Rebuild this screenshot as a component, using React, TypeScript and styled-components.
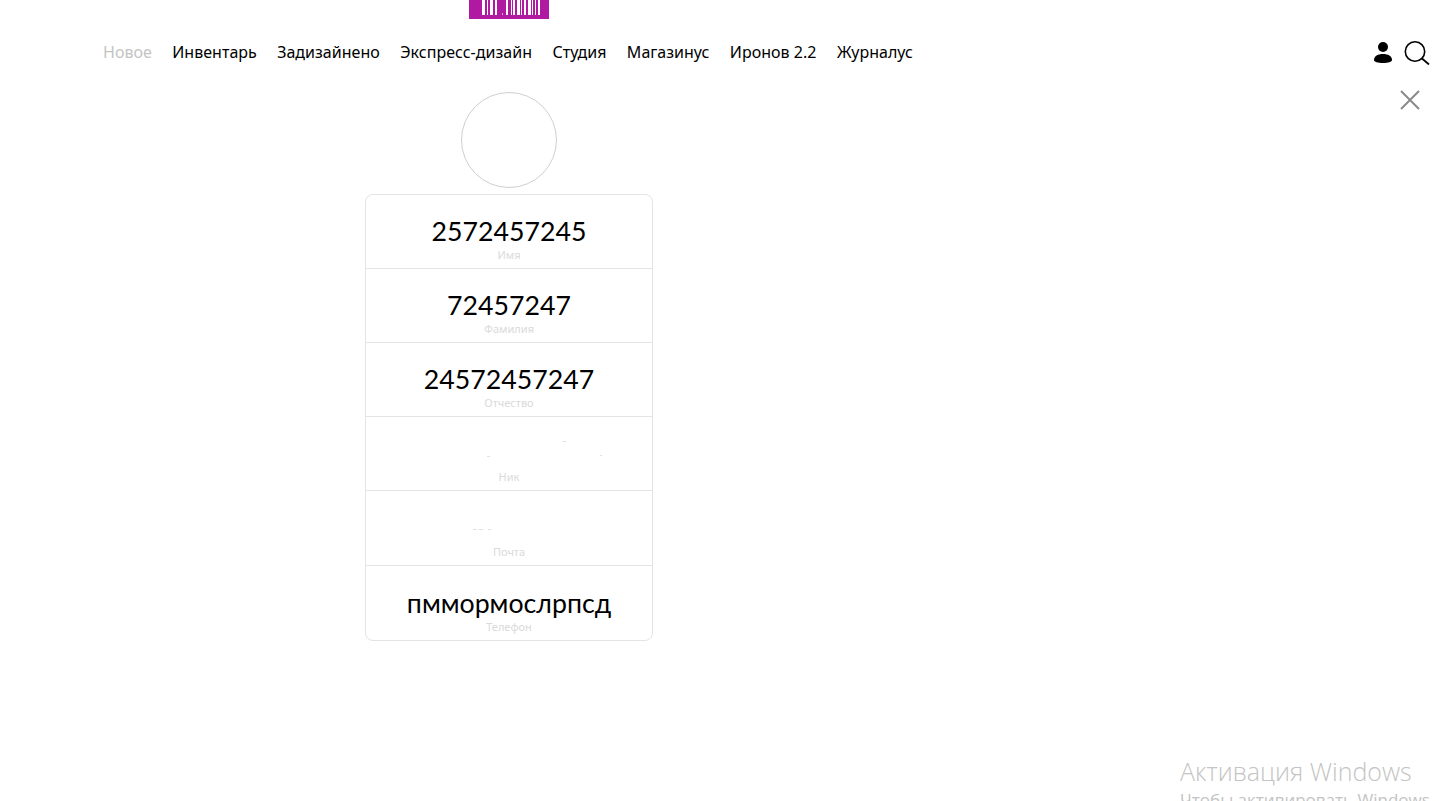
import React from "react";
import styled, { createGlobalStyle } from "styled-components";

const Global = createGlobalStyle`
  html, body { margin: 0; padding: 0; background: #fff; overflow: hidden; }
  body { font-family: "Open Sans", "Noto Sans", sans-serif; }
`;

const Page = styled.div`
  position: relative;
  width: 1439px;
  height: 801px;
  overflow: hidden;
  display: flex;
  flex-direction: column;
`;

const LogoStrip = styled.div`
  height: 19px;
  padding-left: 469px;
  display: flex;
`;

const Logo = styled.svg`
  display: block;
  width: 80px;
  height: 19px;
`;

const Header = styled.header`
  height: 54px;
  margin-top: 6px;
  padding: 0 9px 0 103px;
  display: flex;
  align-items: center;
  justify-content: space-between;
`;

const Nav = styled.nav`
  display: flex;
  gap: 20.4px;
`;

const NavLink = styled.a<{ $muted?: boolean }>`
  font-family: "Noto Sans", "Open Sans", sans-serif;
  font-size: 16px;
  line-height: 22px;
  letter-spacing: 0.02px;
  color: ${(p) => (p.$muted ? "#c4c4c4" : "#000")};
  white-space: nowrap;
`;

const Tools = styled.div`
  display: flex;
  align-items: center;
  gap: 9px;
`;

const CloseRow = styled.div`
  display: flex;
  justify-content: flex-end;
  padding: 10px 18px 0 0;
  height: 0;
`;

const Main = styled.main`
  margin-left: 365px;
  width: 288px;
  margin-top: 3px;
  display: flex;
  flex-direction: column;
  align-items: center;
  gap: 6px;
`;

const Avatar = styled.div`
  width: 96px;
  height: 96px;
  box-sizing: border-box;
  border: 1px solid #cfcfcf;
  border-radius: 50%;
`;

const Card = styled.section`
  width: 288px;
  height: 447px;
  box-sizing: border-box;
  border: 1px solid #e4e4e4;
  border-radius: 8px;
  display: grid;
  grid-template-rows: 73.2px repeat(4, 74.1px) 1fr;
`;

const Row = styled.div`
  position: relative;
  box-sizing: border-box;
  display: flex;
  flex-direction: column;
  align-items: center;
  justify-content: flex-end;
  padding-bottom: 6px;
  & + & {
    border-top: 1px solid #e4e4e4;
  }
`;

const Value = styled.div`
  font-family: "Lato", "Noto Sans", sans-serif;
  font-size: 26.7px;
  line-height: 34px;
  color: #000;
  white-space: nowrap;
`;

const Label = styled.div`
  font-family: "Noto Sans", "Open Sans", sans-serif;
  font-size: 11px;
  line-height: 14px;
  color: #dadada;
`;

const Speck = styled.span<{ $x: number; $y: number; $w: number }>`
  position: absolute;
  left: ${(p) => p.$x}px;
  top: ${(p) => p.$y}px;
  width: ${(p) => p.$w}px;
  height: 1px;
  background: #e2e2e2;
`;

const Watermark = styled.div`
  position: absolute;
  left: 1180px;
  top: 754px;
  font-family: "Open Sans", "Noto Sans", sans-serif;
  color: #c4c4c4;
  white-space: nowrap;
`;

const WatermarkTitle = styled.div`
  font-size: 25px;
  line-height: 34px;
  font-weight: 300;
`;

const WatermarkText = styled.div`
  font-size: 17px;
  line-height: 22px;
  margin-top: 1px;
`;

const links = ["Инвентарь", "Задизайнено", "Экспресс-дизайн", "Студия", "Магазинус", "Иронов 2.2", "Журналус"];

const bars = [
  [13, 3], [18, 1], [21, 3], [26, 2], [37, 2], [42, 1], [44, 2], [48, 3], [52, 1], [55, 2], [59, 3], [63, 1], [66, 1], [69, 2],
];

const fields = [
  { value: "2572457245", label: "Имя" },
  { value: "72457247", label: "Фамилия" },
  { value: "24572457247", label: "Отчество" },
  { value: "", label: "Ник", specks: [[197, 24, 3], [121, 39, 3], [234, 38, 2]] },
  { value: "", label: "Почта", specks: [[107, 38, 4], [113, 38, 4], [122, 38, 3]] },
  { value: "пммормослрпсд", label: "Телефон" },
];

export default function App() {
  return (
    <Page>
      <Global />
      <LogoStrip>
        <Logo viewBox="0 0 80 19" aria-label="logo">
          <rect width="80" height="19" fill="#b01aa0" />
          {bars.map(([x, w]) => (
            <rect key={x} x={x} y="0" width={w} height="15" fill="#fff" />
          ))}
          <rect x="33" y="13" width="1" height="2" fill="#e8a0d8" />
        </Logo>
      </LogoStrip>
      <Header>
        <Nav>
          <NavLink $muted>Новое</NavLink>
          {links.map((l) => (
            <NavLink key={l}>{l}</NavLink>
          ))}
        </Nav>
        <Tools>
          <svg width="22" height="26" viewBox="0 0 22 26">
            <circle cx="10" cy="8" r="5" fill="#000" />
            <path d="M1 21c0-4 4-6 9-6s9 2 9 6c0 2-4 3-9 3s-9-1-9-3z" fill="#000" />
          </svg>
          <svg width="26" height="26" viewBox="0 0 26 26" fill="none" stroke="#000">
            <circle cx="11" cy="12.5" r="9.7" strokeWidth="1.6" />
            <path d="M18 19.5l7 6" strokeWidth="1.8" />
          </svg>
        </Tools>
      </Header>
      <CloseRow>
        <svg width="22" height="22" viewBox="0 0 22 22" stroke="#8a8a8a" strokeWidth="2" fill="none">
          <path d="M2 2l18 18M20 2L2 20" />
        </svg>
      </CloseRow>
      <Main>
        <Avatar />
        <Card>
          {fields.map((f) => (
            <Row key={f.label}>
              {f.specks?.map(([x, y, w]) => (
                <Speck key={x} $x={x} $y={y} $w={w} />
              ))}
              {f.value && <Value>{f.value}</Value>}
              <Label>{f.label}</Label>
            </Row>
          ))}
        </Card>
      </Main>
      <Watermark>
        <WatermarkTitle>Активация Windows</WatermarkTitle>
        <WatermarkText>Чтобы активировать Windows</WatermarkText>
      </Watermark>
    </Page>
  );
}
